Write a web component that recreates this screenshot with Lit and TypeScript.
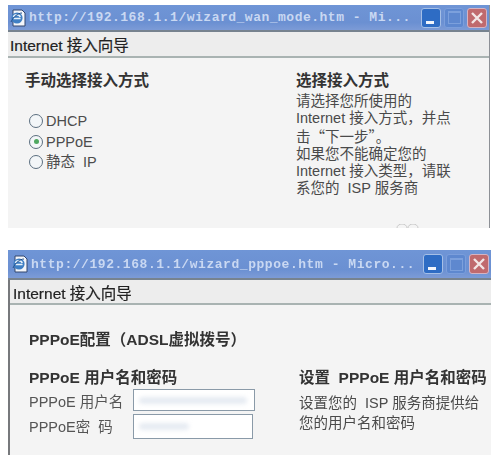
import { LitElement, html, css } from "lit";
import { customElement } from "lit/decorators.js";

function ieIcon() {
  return html`<svg class="ie" width="16" height="18" viewBox="0 0 16 18">
    <path d="M3 1h9l3 3v13H3z" fill="#f4f6fa" stroke="#33466e" stroke-width="1"/>
    <circle cx="7" cy="9" r="5.6" fill="#3f7fc4"/>
    <path d="M3.6 9.5h7M3.5 8c.6-2.6 5.6-3.2 6.7 0" fill="none" stroke="#e8f2fa" stroke-width="1.6"/>
    <path d="M1 13c2-5 7-9 11-9" fill="none" stroke="#22508c" stroke-width="1"/>
  </svg>`;
}

function winButtons() {
  return html`<div class="btns">
    <div class="btn min"><span class="dash"></span></div>
    <div class="btn max"><span class="box"></span></div>
    <div class="btn close">
      <svg width="16" height="16" viewBox="0 0 16 16"><path d="M3 3l10 10M13 3L3 13" stroke="#f3e6e6" stroke-width="2.4" fill="none"/></svg>
    </div>
  </div>`;
}

@customElement("app-root")
export class AppRoot extends LitElement {
  static styles = css`
    :host { display: block; width: 494px; height: 470px; background: #fff; overflow: hidden; font-family: "Liberation Sans", "Noto Sans CJK SC", sans-serif; color: #454545; }
    .page { display: flex; flex-direction: column; padding: 5px 4px 0 8px; filter: blur(0.3px); }
    .win { display: flex; flex-direction: column; background: #f4f4f4; position: relative; }
    .w1 { width: 482px; height: 223px; border-right: 1px solid #8d9096; box-sizing: border-box; }
    .w2 { width: 483px; height: 205px; margin-top: 22px; border-left: 2px solid #77797c; box-sizing: border-box; }
    .arcs { position: absolute; left: 388px; bottom: 0; }
    .title { display: flex; align-items: center; background: linear-gradient(#6f95d6, #6b90d2 70%, #7c9bd6); border-bottom: 2px solid #77838f; box-sizing: border-box; padding-left: 2px; gap: 3px; flex: none; }
    .w1 .title { height: 27px; }
    .w2 .title { height: 30px; margin-left: -2px; padding-left: 4px; }
    .ie { flex: none; }
    .url { flex: 1; font: bold 13px "Liberation Mono", monospace; letter-spacing: 0.5px; color: #c9d8f2; white-space: nowrap; overflow: hidden; }
    .w2 .url { letter-spacing: 0.55px; }
    .btns { display: flex; gap: 3px; padding-right: 2px; }
    .btn { width: 20px; height: 20px; border-radius: 3px; box-sizing: border-box; display: flex; align-items: center; justify-content: center; }
    .min { background: #2e6cc4; border: 1px solid #a5bfe6; align-items: flex-end; justify-content: flex-start; padding: 0 0 3px 4px; }
    .dash { display: block; width: 8px; height: 3px; background: #f2f5fb; }
    .max { background: #5e88cf; border: 1px solid #7b9edb; }
    .box { display: block; width: 11px; height: 10px; border: 1px solid #7ca0dc; border-top-width: 2px; }
    .close { background: #c06a6e; border: 1px solid #d5b3c2; }
    .head { height: 26px; box-sizing: border-box; background: #ededed; border-bottom: 2px solid #a9b3b2; display: flex; align-items: center; flex: none; font-size: 15.5px; color: #222; padding-left: 2px; -webkit-text-stroke: 0.2px #222; }
    .w2 .head { height: 25px; padding-left: 3px; }
    .body1 { flex: 1; display: grid; grid-template-columns: 271px 1fr; padding: 14px 0 0 17px; }
    .h { font-size: 15.5px; font-weight: bold; color: #333; line-height: 18px; white-space: nowrap; }
    .radios { margin-top: 21px; display: flex; flex-direction: column; font-size: 14.5px; line-height: 20.5px; }
    .radio { display: flex; align-items: center; gap: 3px; padding-left: 4px; color: #4c4c4c; }
    .dot { width: 12px; height: 12px; border-radius: 50%; border: 1px solid #5c6f80; background: #f3f6f8; display: flex; align-items: center; justify-content: center; flex: none; }
    .dot i { width: 5px; height: 5px; border-radius: 50%; background: #4fa860; display: block; }
    .side { font-size: 14.5px; line-height: 17.1px; color: #4a4a4a; }
    .side .h { margin-bottom: 3px; }
    .side p { margin: 0; white-space: nowrap; }
    .cjk { font-family: "Noto Sans CJK SC", sans-serif; }
    .body2 { flex: 1; padding: 26px 0 0 19px; display: flex; flex-direction: column; }
    .cols { display: grid; grid-template-columns: 270px 1fr; margin-top: 20px; }
    .form .h { margin-bottom: 2px; }
    .row { display: flex; align-items: center; font-size: 14.5px; color: #555; }
    .row label { width: 104px; flex: none; white-space: nowrap; }
    .field { box-sizing: border-box; border: 1px solid #8a9aa8; background: #fff; display: flex; align-items: center; padding-left: 5px; }
    .f1 { width: 122px; height: 22px; }
    .f2 { width: 120px; height: 25px; margin-top: 3px; }
    .blur { display: block; height: 7px; border-radius: 4px; background: #e6ebf2; filter: blur(2px); }
    .f1 .blur { width: 108px; }
    .f2 .blur { width: 50px; }
    .desc { font-size: 14.5px; line-height: 20px; color: #4a4a4a; margin-top: 6px; white-space: nowrap; }
  `;

  render() {
    return html`<div class="page">
      <section class="win w1">
        <div class="title">${ieIcon()}<div class="url">http://192.168.1.1/wizard_wan_mode.htm - Mi...</div>${winButtons()}</div>
        <div class="head">Internet 接入向导</div>
        <div class="body1">
          <div>
            <div class="h">手动选择接入方式</div>
            <div class="radios">
              <div class="radio"><span class="dot"></span>DHCP</div>
              <div class="radio"><span class="dot"><i></i></span>PPPoE</div>
              <div class="radio"><span class="dot"></span>静态&nbsp; IP</div>
            </div>
          </div>
          <div class="side">
            <div class="h">选择接入方式</div>
            <p>请选择您所使用的<br />Internet 接入方式，并点<br />击<span class="cjk">“下一步”</span>。<br />如果您不能确定您的<br />Internet 接入类型，请联<br />系您的 &nbsp;ISP 服务商</p>
          </div>
        </div>
        <svg class="arcs" width="24" height="4" viewBox="0 0 24 4"><path d="M1 4a5 4 0 0 1 10 0M12 4a5 4 0 0 1 10 0" fill="none" stroke="#c9c9c9"/></svg>
      </section>
      <section class="win w2">
        <div class="title">${ieIcon()}<div class="url">http://192.168.1.1/wizard_pppoe.htm - Micro...</div>${winButtons()}</div>
        <div class="head">Internet 接入向导</div>
        <div class="body2">
          <div class="h">PPPoE配置（ADSL虚拟拨号）</div>
          <div class="cols">
            <div class="form">
              <div class="h">PPPoE 用户名和密码</div>
              <div class="row"><label>PPPoE 用户名</label><div class="field f1"><span class="blur"></span></div></div>
              <div class="row"><label>PPPoE密 &nbsp;码</label><div class="field f2"><span class="blur"></span></div></div>
            </div>
            <div>
              <div class="h">设置 &nbsp;PPPoE 用户名和密码</div>
              <div class="desc">设置您的 &nbsp;ISP 服务商提供给<br />您的用户名和密码</div>
            </div>
          </div>
        </div>
      </section>
    </div>`;
  }
}
